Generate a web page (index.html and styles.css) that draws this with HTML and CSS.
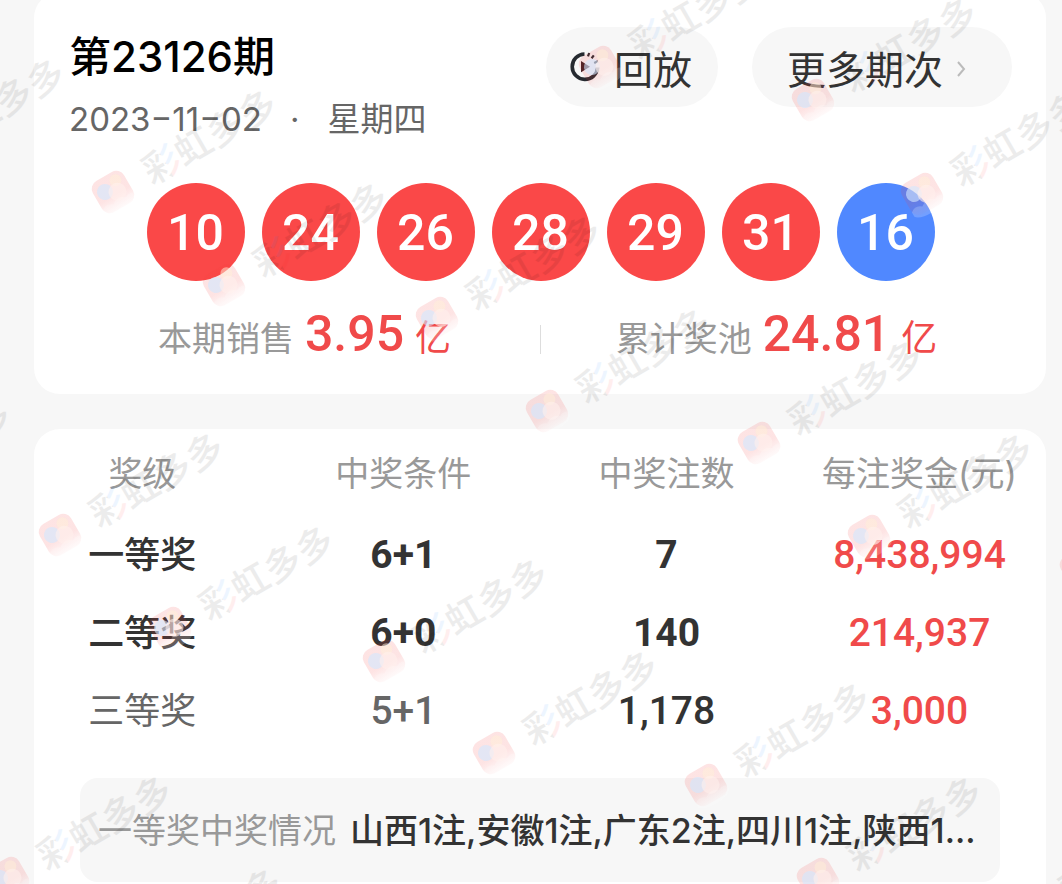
FILE: index.html
```html
<!DOCTYPE html>
<html lang="zh-CN">
<head>
    <meta charset="UTF-8">
    <meta name="viewport" content="width=device-width, initial-scale=1.0">
    <title>第23126期</title>
    <link rel="stylesheet" href="styles.css">
</head>
<body>
    <section class="card draw-card">
        <header class="draw-header">
            <div class="draw-info">
                <h1 class="draw-title">第23126期</h1>
                <div class="draw-date">
                    <span>2023−11−02</span>
                    <span>·</span>
                    <span>星期四</span>
                </div>
            </div>
            <div class="draw-actions">
                <button class="pill replay-button">
                    <svg class="replay-icon" viewBox="0 0 30 30">
                        <path d="M14.500 2A12.700 12.700 0 1 0 27.600 15.500" fill="none" stroke="#262a30" stroke-width="3.600"></path>
                        <path d="M19.200 1l-1.200 3.400M23.800 3.400l-2.200 2.800M27.800 9.300l-3.600 1.800" fill="none" stroke="#262a30" stroke-width="2.200"></path>
                        <path d="M11 9l9 5.700-9 5.600z" fill="#3a2024"></path>
                    </svg>
                    回放
                </button>
                <button class="pill more-button">
                    更多期次
                    <svg class="chevron" viewBox="0 0 12 18">
                        <path d="M3 4l6 7-6 7"></path>
                    </svg>
                </button>
            </div>
        </header>

        <div class="balls">
            <span class="ball">10</span>
            <span class="ball">24</span>
            <span class="ball">26</span>
            <span class="ball">28</span>
            <span class="ball">29</span>
            <span class="ball">31</span>
            <span class="ball blue">16</span>
        </div>

        <div class="stats">
            <div class="stat">
                <span class="stat-label">本期销售</span>
                <span class="stat-value">3.95</span>
                <span class="stat-unit">亿</span>
            </div>
            <div class="stat-divider"></div>
            <div class="stat">
                <span class="stat-label">累计奖池</span>
                <span class="stat-value">24.81</span>
                <span class="stat-unit">亿</span>
            </div>
        </div>
    </section>

    <section class="card prize-card">
        <table class="prize-table">
            <thead>
                <tr>
                    <th class="col-level">奖级</th>
                    <th class="col-rule">中奖条件</th>
                    <th>中奖注数</th>
                    <th>每注奖金(元)</th>
                </tr>
            </thead>
            <tbody>
                <tr class="top">
                    <td class="level">一等奖</td>
                    <td>6+1</td>
                    <td>7</td>
                    <td class="money">8,438,994</td>
                </tr>
                <tr class="top">
                    <td class="level">二等奖</td>
                    <td>6+0</td>
                    <td>140</td>
                    <td class="money">214,937</td>
                </tr>
                <tr>
                    <td class="level">三等奖</td>
                    <td>5+1</td>
                    <td class="count">1,178</td>
                    <td class="money">3,000</td>
                </tr>
            </tbody>
        </table>

        <div class="winners">
            <span class="winners-label">一等奖中奖情况</span>
            <span class="winners-list">山西1注,安徽1注,广东2注,四川1注,陕西1...</span>
        </div>
    </section>

    <svg class="watermark" aria-hidden="true">
        <defs>
            <!-- grey lettering, blue and red strokes in the first character -->
            <pattern id="ink" patternUnits="userSpaceOnUse" x="37" y="-30" width="200" height="60">
                <rect width="200" height="60" fill="#000"></rect>
                <rect x="23" width="14" height="33" fill="#1482ff"></rect>
                <rect x="23" y="33" width="14" height="27" fill="#ff1e1e"></rect>
            </pattern>
            <linearGradient id="tile" x1="0" y1="0" x2="0" y2="1">
                <stop offset="0.6" stop-color="#f43c3c" stop-opacity="0.14"></stop>
                <stop offset="1" stop-color="#f43c3c" stop-opacity="0.03"></stop>
            </linearGradient>
            <g id="mark">
                <g transform="rotate(-30)">
                    <rect x="-18" y="-18" width="36" height="36" rx="9" fill="url(#tile)"></rect>
                    <circle cx="8" cy="-9" r="6" fill="#fff0d8" fill-opacity="0.5"></circle>
                    <circle cx="-7" cy="-4" r="8" fill="#d2e8ff" fill-opacity="0.6"></circle>
                    <circle cx="4" cy="2" r="9" fill="#fff0ec" fill-opacity="0.6"></circle>
                    <path d="M-18 11q6-5 12 0q8-6 15 0q5-3 9 0v4q-4 6-18 6t-18-5z" fill="#fff" fill-opacity="0.2"></path>
                    <text x="37" y="14" fill="url(#ink)">彩虹多多</text>
                </g>
            </g>
        </defs>
        <use href="#mark" x="490" y="-28"></use>
        <use href="#mark" x="600" y="67"></use>
        <use href="#mark" x="813" y="100"></use>
        <use href="#mark" x="922" y="194"></use>
        <use href="#mark" x="-99" y="161"></use>
        <use href="#mark" x="113" y="192"></use>
        <use href="#mark" x="224" y="285"></use>
        <use href="#mark" x="437" y="318"></use>
        <use href="#mark" x="547" y="411"></use>
        <use href="#mark" x="759" y="443"></use>
        <use href="#mark" x="869" y="536"></use>
        <use href="#mark" x="1081" y="568"></use>
        <use href="#mark" x="-153" y="503"></use>
        <use href="#mark" x="60" y="535"></use>
        <use href="#mark" x="170" y="628"></use>
        <use href="#mark" x="384" y="661"></use>
        <use href="#mark" x="494" y="753"></use>
        <use href="#mark" x="706" y="785"></use>
        <use href="#mark" x="818" y="879"></use>
        <use href="#mark" x="1030" y="911"></use>
        <use href="#mark" x="8" y="878"></use>
        <use href="#mark" x="118" y="971"></use>
    </svg>
</body>
</html>
```
FILE: styles.css
```css
* {
    margin: 0;
    padding: 0;
    box-sizing: border-box;
}

body {
    position: relative;
    min-height: 100vh;
    display: flex;
    flex-direction: column;
    gap: 35px;
    padding: 0 16px 0 34px;
    background: #f7f7f7;
    color: #333;
    font-family: Inter, "Noto Sans CJK SC", sans-serif;
    font-size: 34px;
}

.card {
    background: #fff;
    border-radius: 26px;
}

.draw-card {
    margin-top: -8px;
    padding: 35px 34px 25px 35px;
}

.draw-header {
    display: flex;
    justify-content: space-between;
    align-items: flex-start;
}

.draw-title {
    font-size: 42px;
    font-weight: 500;
    line-height: 60px;
    color: #000;
}

.draw-date {
    display: flex;
    gap: 28px;
    font-size: 33px;
    line-height: 64px;
    color: #666;
}

.draw-actions {
    display: flex;
    gap: 34px;
}

.pill {
    display: flex;
    align-items: center;
    height: 80px;
    border: none;
    border-radius: 40px;
    background: #f7f7f7;
    color: #333;
    font-family: inherit;
    font-size: 39px;
    cursor: pointer;
}

.replay-button {
    gap: 14px;
    padding: 0 26px 0 24px;
}

.more-button {
    gap: 12px;
    padding: 0 45px 0 35px;
}

.replay-icon {
    width: 30px;
    height: 30px;
}

.chevron {
    width: 12px;
    height: 18px;
    fill: none;
    stroke: #bbb;
    stroke-width: 2;
    overflow: visible;
}

.balls {
    display: flex;
    justify-content: center;
    gap: 17px;
    margin-top: 32px;
}

.ball {
    width: 98px;
    height: 98px;
    border-radius: 50%;
    background: #fa4848;
    color: #fff;
    font-family: Roboto, sans-serif;
    font-size: 50px;
    font-weight: 500;
    line-height: 100px;
    text-align: center;
}

.ball.blue {
    background: #5088ff;
}

.stats {
    display: flex;
    align-items: center;
    margin-top: 23px;
}

.stat {
    flex: 1;
    display: flex;
    align-items: baseline;
    justify-content: center;
    line-height: 60px;
}

.stat-label {
    color: #999;
}

.stat-value {
    margin: 0 11px;
    color: #f04a4a;
    font-family: Roboto, sans-serif;
    font-size: 50px;
    font-weight: 500;
}

.stat-unit {
    color: #f04a4a;
    font-size: 36px;
}

.stat-divider {
    width: 1px;
    height: 29px;
    margin-top: 6px;
    background: #ddd;
}

.prize-card {
    flex: 1;
    padding-bottom: 3px;
    border-radius: 26px 26px 0 0;
}

.prize-table {
    width: 100%;
    table-layout: fixed;
    border-collapse: collapse;
    text-align: center;
}

.prize-table th {
    height: 87px;
    padding-bottom: 2px;
    color: #999;
    font-weight: 400;
}

.prize-table .col-level {
    width: 23%;
}

.prize-table .col-rule {
    width: 27%;
}

.prize-table tr > :first-child {
    padding-right: 16px;
}

.prize-table td {
    height: 78px;
    color: #666;
    font-family: Roboto, "Noto Sans CJK SC", sans-serif;
    font-size: 39px;
    font-weight: 500;
}

.prize-table .level {
    padding-bottom: 6px;
    font-size: 36px;
    font-weight: 400;
}

.prize-table .top td {
    color: #333;
    font-weight: 700;
}

.prize-table .top .level {
    font-weight: 500;
}

.prize-table .count {
    color: #333;
}

.prize-table .money,
.prize-table .top .money {
    color: #f04a4a;
    font-weight: 500;
}

.winners {
    display: flex;
    gap: 14px;
    height: 104px;
    margin: 28px 46px 0;
    padding: 0 18px;
    border-radius: 18px;
    background: #f7f7f7;
    line-height: 106px;
    white-space: nowrap;
}

.winners-label {
    color: #999;
}

.winners-list {
    flex: 1;
    overflow: hidden;
    font-weight: 500;
}

/* Brand mark repeated over the whole page */
.watermark {
    position: absolute;
    top: 0;
    left: 0;
    width: 100%;
    height: 100%;
    overflow: hidden;
    pointer-events: none;
}

.watermark text {
    font-family: "Noto Sans CJK SC", sans-serif;
    font-size: 37px;
    font-weight: 500;
    opacity: 0.07;
}
```
